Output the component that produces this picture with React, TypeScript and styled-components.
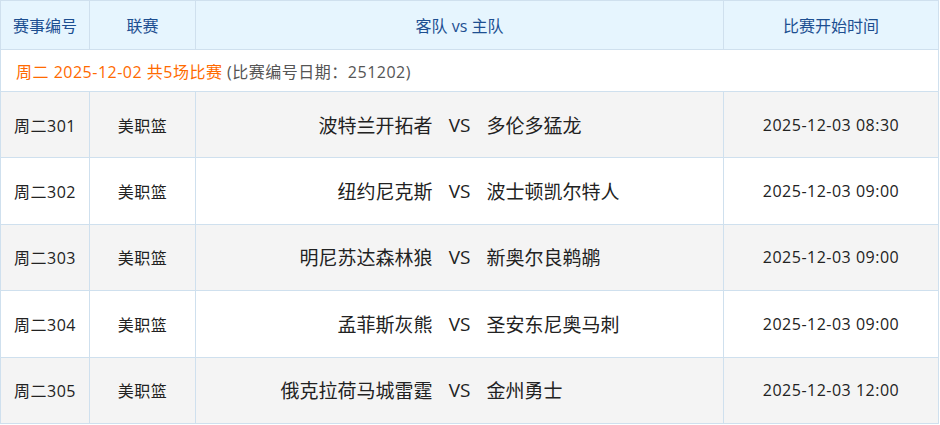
import React from "react";
import styled, { createGlobalStyle } from "styled-components";

const Global = createGlobalStyle`
  html, body { margin: 0; padding: 0; background: #fff; }
  body { font-family: "Open Sans", "Noto Sans CJK SC", sans-serif; }
`;

const Table = styled.table`
  width: 939px;
  border-collapse: collapse;
  table-layout: fixed;
  font-size: 16px;
  letter-spacing: 0.5px;
  color: #222;
`;

const HeadCell = styled.th<{ $w?: number }>`
  width: ${(p) => (p.$w ? `${p.$w}px` : "auto")};
  height: 48px;
  padding: 0;
  background: #e6f5fe;
  color: #1d4f91;
  font-weight: normal;
  letter-spacing: 0;
  text-align: center;
  border: 1px solid #cfe0ee;
`;

const InfoCell = styled.td`
  height: 41px;
  padding: 0 0 0 15px;
  background: #fff;
  border: 1px solid #cfe0ee;
  text-align: left;
`;

const Orange = styled.span`
  color: #ff6a00;
`;

const Gray = styled.span`
  color: #555;
`;

const Row = styled.tr<{ $odd: boolean }>`
  background: ${(p) => (p.$odd ? "#f4f4f4" : "#fff")};
`;

const Cell = styled.td`
  height: 65.4px;
  padding: 0;
  text-align: center;
  border: 1px solid #cfe0ee;
`;

const Matchup = styled.div`
  display: flex;
  align-items: center;
  font-size: 19px;
  letter-spacing: 0;
  color: #222;
`;

const Away = styled.span`
  flex: 1;
  text-align: right;
`;

const Home = styled.span`
  flex: 1;
  text-align: left;
`;

const Vs = styled.span`
  padding: 0 16px;
`;

const matches = [
  { id: "周二301", away: "波特兰开拓者", home: "多伦多猛龙", time: "2025-12-03 08:30" },
  { id: "周二302", away: "纽约尼克斯", home: "波士顿凯尔特人", time: "2025-12-03 09:00" },
  { id: "周二303", away: "明尼苏达森林狼", home: "新奥尔良鹈鹕", time: "2025-12-03 09:00" },
  { id: "周二304", away: "孟菲斯灰熊", home: "圣安东尼奥马刺", time: "2025-12-03 09:00" },
  { id: "周二305", away: "俄克拉荷马城雷霆", home: "金州勇士", time: "2025-12-03 12:00" },
];

export default function App() {
  return (
    <>
      <Global />
      <Table>
        <thead>
          <tr>
            <HeadCell $w={88}>赛事编号</HeadCell>
            <HeadCell $w={105}>联赛</HeadCell>
            <HeadCell>客队 vs 主队</HeadCell>
            <HeadCell $w={214}>比赛开始时间</HeadCell>
          </tr>
        </thead>
        <tbody>
          <tr>
            <InfoCell colSpan={4}>
              <Orange>周二 2025-12-02 共5场比赛</Orange> <Gray>(比赛编号日期：251202)</Gray>
            </InfoCell>
          </tr>
          {matches.map((m, i) => (
            <Row key={m.id} $odd={i % 2 === 0}>
              <Cell>{m.id}</Cell>
              <Cell>美职篮</Cell>
              <Cell>
                <Matchup>
                  <Away>{m.away}</Away>
                  <Vs>VS</Vs>
                  <Home>{m.home}</Home>
                </Matchup>
              </Cell>
              <Cell>{m.time}</Cell>
            </Row>
          ))}
        </tbody>
      </Table>
    </>
  );
}
